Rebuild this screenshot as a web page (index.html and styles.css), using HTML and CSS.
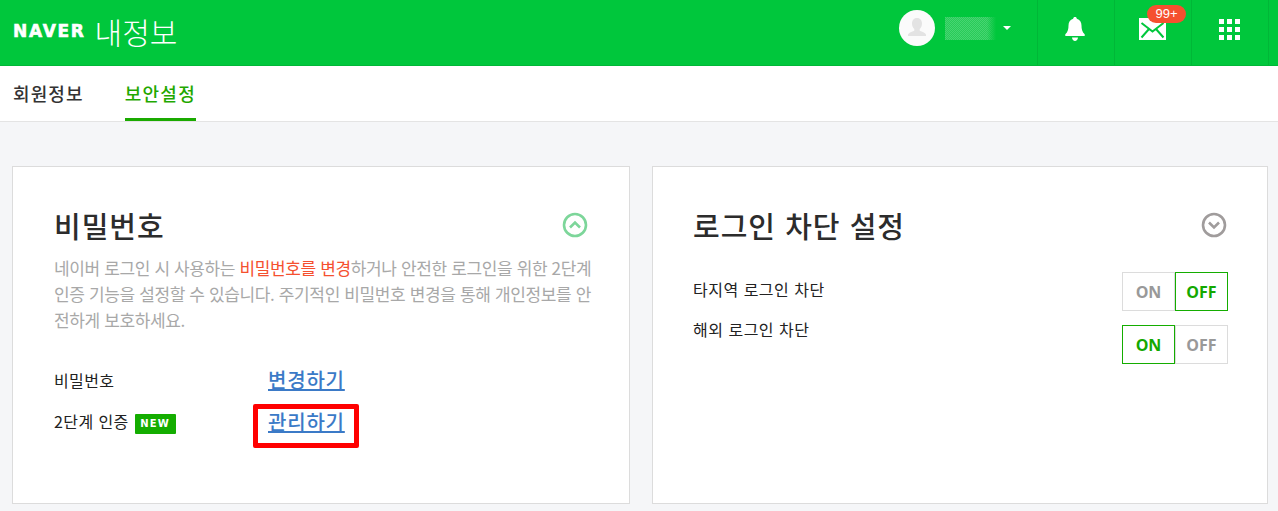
FILE: index.html
```html
<!DOCTYPE html>
<html lang="ko">
<head>
    <meta charset="UTF-8">
    <meta name="viewport" content="width=device-width, initial-scale=1.0">
    <title>네이버 내정보</title>
    <link rel="stylesheet" href="styles.css">
</head>
<body>
    <header class="topbar">
        <div class="brand">
            <span class="logo">NAVER</span>
            <span class="brand-title">내정보</span>
        </div>
        <div class="topbar-right">
            <div class="profile">
                <span class="avatar">
                    <svg width="36" height="36" viewBox="0 0 36 36">
                        <path d="M18 8c3.400 0 5 2.500 5 5.500 0 2.400-1 4.400-2.300 5.500v1.800c2.500 1 5.300 1.800 6.300 3.700v1.500H9v-1.500c1-1.900 3.800-2.700 6.300-3.700V19c-1.300-1.100-2.300-3.100-2.300-5.500C13 10.500 14.600 8 18 8z" fill="#e3e3e3"/>
                    </svg>
                </span>
                <span class="nick"></span>
                <span class="caret"></span>
            </div>
            <div class="top-item">
                <svg width="22" height="24" viewBox="0 0 22 24">
                    <path d="M11 0c1 0 1.800.7 1.800 1.700 3.200.8 4.700 3.500 4.700 6.800 0 3.500.6 6.500 3.200 8.700V19H1.300v-1.800c2.600-2.200 3.200-5.200 3.200-8.700 0-3.300 1.500-6 4.700-6.800C9.200.7 10 0 11 0zM8 20.500h6c-.2 2-1.500 3.500-3 3.500s-2.800-1.500-3-3.500z" fill="#fff"/>
                </svg>
            </div>
            <div class="top-item">
                <svg width="27" height="22" viewBox="0 0 27 22">
                    <path d="M0 0h27v22H0z" fill="#fff"/>
                    <path d="M2.500 5l11 8.500 11-8.500M2.500 19.500l7.500-8.500M24.500 19.500l-7.500-8.500" fill="none" stroke="#00c73c" stroke-width="2"/>
                </svg>
                <span class="badge">99+</span>
            </div>
            <div class="top-item">
                <div class="apps">
                    <i></i><i></i><i></i><i></i><i></i><i></i><i></i><i></i><i></i>
                </div>
            </div>
            <div class="top-end"></div>
        </div>
    </header>

    <nav class="tabs">
        <a class="tab" href="#">회원정보</a>
        <a class="tab active" href="#">보안설정</a>
    </nav>

    <main class="content">
        <section class="card card-password">
            <div class="card-head">
                <h2>비밀번호</h2>
                <svg width="26" height="26" viewBox="0 0 26 26">
                    <circle cx="13" cy="13" r="11" fill="none" stroke="#7dd69a" stroke-width="2.600"/>
                    <path d="M8 15.500l5-5 5 5" fill="none" stroke="#7dd69a" stroke-width="2.600"/>
                </svg>
            </div>
            <p class="desc">네이버 로그인 시 사용하는 <em>비밀번호를 변경</em>하거나 안전한 로그인을 위한 2단계 인증 기능을 설정할 수 있습니다. 주기적인 비밀번호 변경을 통해 개인정보를 안전하게 보호하세요.</p>
            <div class="rows">
                <div class="row">
                    <span class="row-label">비밀번호</span>
                    <a class="row-link" href="#">변경하기</a>
                </div>
                <div class="row">
                    <span class="row-label">2단계 인증 <span class="new">NEW</span></span>
                    <a class="row-link boxed" href="#">관리하기</a>
                </div>
            </div>
        </section>

        <section class="card card-block">
            <div class="card-head">
                <h2>로그인 차단 설정</h2>
                <svg width="26" height="26" viewBox="0 0 26 26">
                    <circle cx="13" cy="13" r="11" fill="none" stroke="#a09c9c" stroke-width="2.600"/>
                    <path d="M8 10.500l5 5 5-5" fill="none" stroke="#a09c9c" stroke-width="2.600"/>
                </svg>
            </div>
            <div class="block-body">
                <div class="block-labels">
                    <div class="row-label">타지역 로그인 차단</div>
                    <div class="row-label">해외 로그인 차단</div>
                </div>
                <div class="toggles">
                    <div class="toggle">
                        <span class="opt">ON</span>
                        <span class="opt on">OFF</span>
                    </div>
                    <div class="toggle">
                        <span class="opt on">ON</span>
                        <span class="opt">OFF</span>
                    </div>
                </div>
            </div>
        </section>
    </main>
</body>
</html>
```

FILE: styles.css
```css
* {
    box-sizing: border-box;
}
html, body {
    height: 100%;
}
body {
    margin: 0;
    background: #f5f6f8;
    font-family: "Noto Sans CJK KR", "Noto Sans", sans-serif;
    color: #333;
    overflow: hidden;
}
a {
    text-decoration: none;
}

/* top bar */
.topbar {
    display: flex;
    justify-content: space-between;
    height: 66px;
    background: #00c73c;
    border-bottom: 1px solid #00b737;
}
.brand {
    display: flex;
    align-items: center;
    padding: 0 0 4px 13px;
    color: #fff;
}
.logo {
    font-family: "DejaVu Sans", sans-serif;
    font-size: 17px;
    font-weight: 700;
    letter-spacing: 1.7px;
    -webkit-text-stroke: .6px #fff;
}
.brand-title {
    margin-left: 9px;
    font-size: 30px;
    font-weight: 300;
}
.topbar-right {
    display: flex;
}
.profile {
    display: flex;
    align-items: flex-start;
    padding-top: 10px;
    width: 138px;
}
.avatar {
    display: flex;
    width: 36px;
    height: 36px;
    border-radius: 50%;
    background: #fbfbfb;
}
.nick {
    width: 51px;
    height: 23px;
    margin: 7px 0 0 10px;
    background: linear-gradient(90deg, transparent 82%, #00c73c 100%), repeating-conic-gradient(#28cb58 0 25%, #46d572 0 50%) 0 0 / 2px 2px;
}
.caret {
    margin: 16px 0 0 7px;
    border: 4px solid transparent;
    border-top: 4px solid #fff;
}
.top-item {
    position: relative;
    display: flex;
    align-items: center;
    justify-content: center;
    width: 77px;
    height: 65px;
    padding: 0 2px 7px 0;
    border-left: 1px solid #00b737;
}
.top-end {
    width: 10px;
    border-left: 1px solid #00b737;
}
.badge {
    position: absolute;
    top: 5px;
    left: 32px;
    width: 39px;
    height: 18px;
    border-radius: 9px;
    background: #f5502f;
    color: #fff;
    font-family: "Liberation Sans", sans-serif;
    font-size: 13px;
    line-height: 18px;
    text-align: center;
}
.apps {
    display: grid;
    grid-template-columns: repeat(3, 5px);
    grid-auto-rows: 5px;
    gap: 3px;
}
.apps i {
    background: #fff;
}

/* tabs */
.tabs {
    display: flex;
    gap: 41px;
    height: 56px;
    padding-left: 13px;
    background: #fff;
    border-bottom: 1px solid #e4e4e4;
}
.tab {
    height: 55px;
    color: #333;
    font-size: 18px;
    font-weight: 500;
    line-height: 55px;
    letter-spacing: 1.1px;
}
.tab.active {
    color: #1fa800;
    border-bottom: 3px solid #1aaa00;
    letter-spacing: 1.3px;
}

/* cards */
.content {
    display: flex;
    gap: 22px;
    padding: 44px 0 0 12px;
}
.card {
    flex: none;
    height: 338px;
    padding: 36px 39px 0 41px;
    background: #fff;
    border: 1px solid #dcdcdc;
}
.card-password {
    width: 618px;
}
.card-block {
    width: 616px;
    padding-left: 40px;
}
.card-head {
    display: flex;
    align-items: center;
    justify-content: space-between;
    height: 44px;
}
.card-head svg {
    margin-right: 2px;
}
.card-block .card-head svg {
    margin-right: 1px;
}
h2 {
    margin: 0;
    font-size: 29px;
    font-weight: 500;
    color: #2c2c2c;
    letter-spacing: 1px;
}
.desc {
    margin: 8px -4px 0 0;
    color: #a8a8a8;
    font-size: 17px;
    line-height: 26px;
    letter-spacing: -.37px;
}
.desc em {
    color: #f5502f;
    font-style: normal;
}
.rows {
    margin-top: 26px;
}
.row {
    display: flex;
    align-items: center;
    height: 41px;
}
.row + .row {
    margin-top: 1px;
}
.row-label {
    color: #222;
    font-size: 16px;
    letter-spacing: .4px;
}
.row .row-label {
    width: 214px;
}
.row-link {
    position: relative;
    color: #3b7ac7;
    font-size: 20px;
    font-weight: 500;
    line-height: 28px;
    letter-spacing: .8px;
    text-decoration: underline;
}
.boxed::after {
    content: "";
    position: absolute;
    top: -4px;
    right: -14px;
    bottom: -12px;
    left: -15px;
    border: 5px solid #f00;
    border-radius: 2px;
}
.new {
    display: inline-block;
    width: 41px;
    height: 20px;
    margin-left: 1px;
    border-radius: 1px;
    background: #14ad00;
    color: #fff;
    font-family: "DejaVu Sans", sans-serif;
    font-size: 10px;
    font-weight: 700;
    line-height: 20px;
    letter-spacing: 1.1px;
    text-align: center;
    vertical-align: 1px;
}
.block-body {
    display: flex;
    justify-content: space-between;
    margin-top: 22px;
}
.block-labels .row-label {
    line-height: 40px;
    letter-spacing: .5px;
}
.toggles {
    display: flex;
    flex-direction: column;
    gap: 14px;
    padding-top: 3px;
}
.toggle {
    display: flex;
}
.opt {
    width: 53px;
    height: 39px;
    border: 1px solid #dcdcdc;
    color: #999;
    font-family: "Open Sans", sans-serif;
    font-size: 16px;
    font-weight: 700;
    line-height: 39px;
    text-align: center;
}
.opt.on {
    border-color: #14ad00;
    color: #14a800;
}
```
